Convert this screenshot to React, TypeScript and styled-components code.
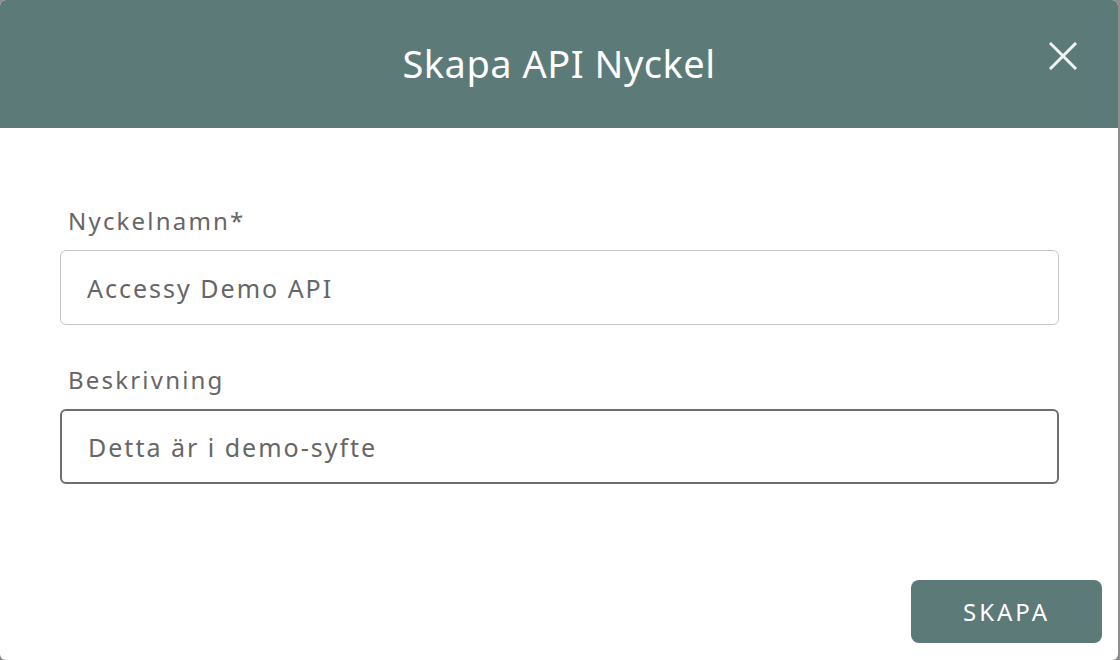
import React from "react";
import styled, { createGlobalStyle } from "styled-components";

const Global = createGlobalStyle`
  html, body { margin: 0; padding: 0; background: #8e8e8e; }
  body { font-family: "Noto Sans", sans-serif; }
  * { box-sizing: border-box; }
`;

const Modal = styled.div`
  width: 1118px;
  height: 660px;
  background: #ffffff;
  border-radius: 6px;
  overflow: hidden;
  display: flex;
  flex-direction: column;
`;

const Header = styled.header`
  height: 128px;
  flex-shrink: 0;
  background: #5c7a77;
  display: flex;
  align-items: center;
  justify-content: center;
  position: relative;
`;

const Title = styled.h1`
  margin: 0;
  color: #ffffff;
  font-weight: 400;
  font-size: 38px;
  letter-spacing: 0.5px;
  padding-bottom: 2px;
`;

const Close = styled.button`
  position: absolute;
  right: 40px;
  top: 41px;
  width: 30px;
  height: 30px;
  padding: 0;
  border: none;
  background: transparent;
  display: flex;
  align-items: center;
  justify-content: center;
  cursor: pointer;
`;

const Form = styled.div`
  display: flex;
  flex-direction: column;
  gap: 40px;
  padding: 78px 60px 0 60px;
`;

const Field = styled.div`
  display: flex;
  flex-direction: column;
`;

const Label = styled.label`
  color: #666666;
  font-size: 24px;
  letter-spacing: 2.2px;
  padding-left: 8px;
  margin-bottom: 14px;
  line-height: 30px;
`;

const Input = styled.div<{ $active?: boolean }>`
  width: 999px;
  height: 75px;
  border: ${(p) => (p.$active ? "2px solid #6e6e6e" : "1.5px solid #c6c6c6")};
  border-radius: 6px;
  display: flex;
  align-items: center;
  padding-left: 26px;
  color: #666666;
  font-size: 25px;
  letter-spacing: 2px;
`;

const Footer = styled.div`
  margin-top: auto;
  display: flex;
  justify-content: flex-end;
  padding: 0 16px 17px 0;
`;

const Button = styled.button`
  width: 191px;
  height: 63px;
  background: #5c7a77;
  color: #ffffff;
  border: none;
  border-radius: 8px;
  font-family: "Noto Sans", sans-serif;
  font-size: 24px;
  letter-spacing: 3px;
  padding: 0;
  cursor: pointer;
`;

export default function App() {
  return (
    <>
      <Global />
      <Modal>
        <Header>
          <Title>Skapa API Nyckel</Title>
          <Close aria-label="Stäng">
            <svg width="28" height="28" viewBox="0 0 28 28">
              <path d="M2 2 L26 26 M26 2 L2 26" stroke="#f2f2f2" strokeWidth="3" strokeLinecap="square" />
            </svg>
          </Close>
        </Header>
        <Form>
          <Field>
            <Label>Nyckelnamn*</Label>
            <Input>Accessy Demo API</Input>
          </Field>
          <Field>
            <Label>Beskrivning</Label>
            <Input $active>Detta är i demo-syfte</Input>
          </Field>
        </Form>
        <Footer>
          <Button>SKAPA</Button>
        </Footer>
      </Modal>
    </>
  );
}
